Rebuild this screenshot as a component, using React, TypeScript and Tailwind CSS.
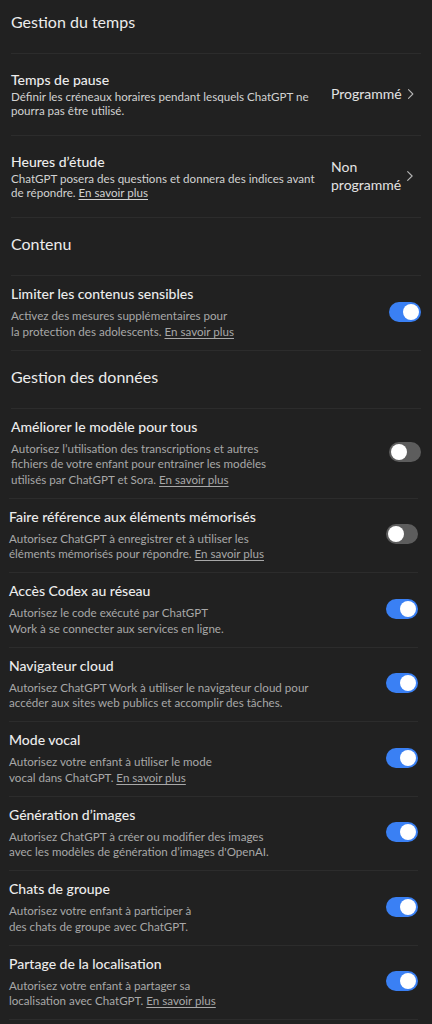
import { ChevronRight } from "lucide-react";
import { ReactNode } from "react";

type Toggle = {
  title: string;
  lines: ReactNode[];
  on: boolean;
};

const LINK = <span className="underline underline-offset-2">En savoir plus</span>;

const DATA_ROWS: Toggle[] = [
  {
    title: "Faire référence aux éléments mémorisés",
    lines: [
      "Autorisez ChatGPT à enregistrer et à utiliser les",
      <>éléments mémorisés pour répondre. {LINK}</>,
    ],
    on: false,
  },
  {
    title: "Accès Codex au réseau",
    lines: ["Autorisez le code exécuté par ChatGPT", "Work à se connecter aux services en ligne."],
    on: true,
  },
  {
    title: "Navigateur cloud",
    lines: [
      "Autorisez ChatGPT Work à utiliser le navigateur cloud pour",
      "accéder aux sites web publics et accomplir des tâches.",
    ],
    on: true,
  },
  {
    title: "Mode vocal",
    lines: ["Autorisez votre enfant à utiliser le mode", <>vocal dans ChatGPT. {LINK}</>],
    on: true,
  },
  {
    title: "Génération d’images",
    lines: [
      "Autorisez ChatGPT à créer ou modifier des images",
      "avec les modèles de génération d’images d'OpenAI.",
    ],
    on: true,
  },
  {
    title: "Chats de groupe",
    lines: ["Autorisez votre enfant à participer à", "des chats de groupe avec ChatGPT."],
    on: true,
  },
  {
    title: "Partage de la localisation",
    lines: ["Autorisez votre enfant à partager sa", <>localisation avec ChatGPT. {LINK}</>],
    on: true,
  },
];

function Switch({ on }: { on: boolean }) {
  return (
    <div
      className={
        "flex h-5 w-8 shrink-0 items-center rounded-full px-0.5 " +
        (on ? "justify-end bg-[#3a80f4]" : "justify-start bg-[#5d5d5d]")
      }
    >
      <div className="h-4 w-4 rounded-full bg-white" />
    </div>
  );
}

function Heading({ children, first }: { children: ReactNode; first?: boolean }) {
  return (
    <h2
      className={
        "pb-[19px] text-[16px] leading-6 text-[#ececec] " +
        (first ? "pt-[10px]" : "border-t border-[#2c2c2c] pt-[14px]")
      }
    >
      {children}
    </h2>
  );
}

function ToggleRow({ title, lines, on }: Toggle) {
  return (
    <div className="flex items-center gap-4 border-t border-[#2c2c2c] pt-2 pb-[10.5px]">
      <div className="flex-1">
        <div className="text-[14px] font-medium leading-5 text-[#ececec]">{title}</div>
        <p className="mt-1 text-[11.6px] leading-[15.5px] text-[#a8a8a8]">
          {lines.map((l, i) => (
            <span key={i} className="block whitespace-nowrap">
              {l}
            </span>
          ))}
        </p>
      </div>
      <Switch on={on} />
    </div>
  );
}

function ScheduleRow({ title, lines, value }: { title: string; lines: ReactNode[]; value: ReactNode }) {
  return (
    <div className="flex items-center border-t border-[#2c2c2c] pt-4 pb-[17px]">
      <div className="flex-1">
        <div className="text-[14px] font-medium leading-5 text-[#ececec]">{title}</div>
        <p className="text-[11.6px] leading-[14px] text-[#d2d2d2]">
          {lines.map((l, i) => (
            <span key={i} className="block whitespace-nowrap">
              {l}
            </span>
          ))}
        </p>
      </div>
      <div className="flex w-[90px] items-center justify-between pr-0.5">
        <span className="whitespace-nowrap text-[14px] leading-[18px] text-[#e3e3e3]">{value}</span>
        <ChevronRight className="h-[18px] w-[18px] text-[#b4b4b4]" strokeWidth={1.5} />
      </div>
    </div>
  );
}

export default function App() {
  return (
    <div className="min-h-screen bg-[#212121] font-['Lato','Segoe_UI',sans-serif]">
      <div className="px-[11px]">
        <Heading first>Gestion du temps</Heading>
        <ScheduleRow
          title="Temps de pause"
          lines={["Définir les créneaux horaires pendant lesquels ChatGPT ne", "pourra pas être utilisé."]}
          value="Programmé"
        />
        <ScheduleRow
          title="Heures d’étude"
          lines={["ChatGPT posera des questions et donnera des indices avant", <>de répondre. {LINK}</>]}
          value={
            <>
              Non
              <br />
              programmé
            </>
          }
        />
        <Heading>Contenu</Heading>
        <ToggleRow
          title="Limiter les contenus sensibles"
          lines={["Activez des mesures supplémentaires pour", <>la protection des adolescents. {LINK}</>]}
          on
        />
        <Heading>Gestion des données</Heading>
        <ToggleRow
          title="Améliorer le modèle pour tous"
          lines={[
            "Autorisez l’utilisation des transcriptions et autres",
            "fichiers de votre enfant pour entraîner les modèles",
            <>utilisés par ChatGPT et Sora. {LINK}</>,
          ]}
          on={false}
        />
      </div>
      <div className="ml-[9px] mr-[14px] border-b border-[#2c2c2c]">
        {DATA_ROWS.map((r) => (
          <ToggleRow key={r.title} {...r} />
        ))}
      </div>
    </div>
  );
}
